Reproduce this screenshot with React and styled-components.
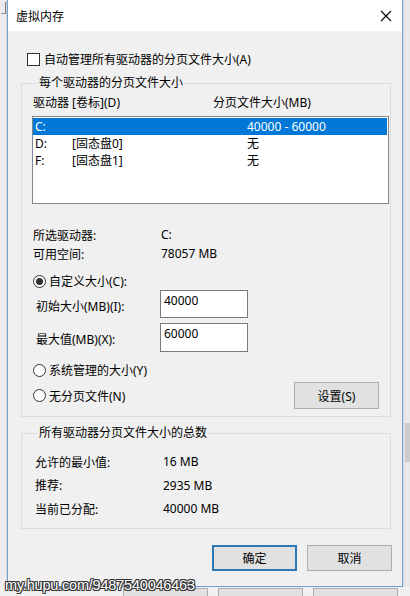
import styled, { createGlobalStyle } from "styled-components";

const GlobalStyle = createGlobalStyle`
  html, body {
    margin: 0;
    padding: 0;
    background: #e6e6e6;
  }
  * {
    box-sizing: border-box;
  }
`;

const font = `"Noto Sans", "Noto Sans CJK SC", sans-serif`;

const Page = styled.div`
  position: relative;
  width: 410px;
  height: 596px;
  overflow: hidden;
  display: flex;
  flex-direction: column;
  font-family: ${font};
  font-size: 12px;
  color: #000;
`;

const TopArea = styled.div`
  display: flex;
  height: 587px;
`;

const LeftStrip = styled.div`
  width: 7px;
  background: #ececec;
  border-right: 1px solid #d6d6d6;
  display: flex;
  flex-direction: column;
  padding: 2px 0 0 1px;
`;

const LeftMark = styled.div`
  width: 5px;
  height: 12px;
  border-right: 1px solid #777;
  border-bottom: 1px solid #999;
`;

const RightStrip = styled.div`
  flex: 1;
  background: #e9e9e9;
  display: flex;
  flex-direction: column;
  padding-top: 423px;
  border-left: 2px solid #e1e1e1;
`;

const ScrollBlock = styled.div`
  height: 39px;
  background: #cdcdcd;
`;

const Dialog = styled.div`
  width: 396px;
  display: flex;
  flex-direction: column;
  border: 1px solid #6f9fd0;
  border-top: none;
  background: #f0f0f0;
`;

const TitleBar = styled.div`
  height: 31px;
  background: #fff;
  display: flex;
  align-items: center;
  justify-content: space-between;
  padding: 0 10px 0 8px;
`;

const Title = styled.span`
  font-size: 12px;
`;

const Body = styled.div`
  flex: 1;
  display: flex;
  flex-direction: column;
  padding: 20px 11px 0 13px;
`;

const CheckRow = styled.label`
  display: flex;
  align-items: center;
  height: 16px;
  padding-left: 6px;
  gap: 4px;
`;

const CheckBox = styled.span`
  width: 13px;
  height: 13px;
  border: 1px solid #333;
  background: #fff;
`;

const Group = styled.fieldset`
  margin: ${(p) => p.$top}px 0 0 0;
  border: 1px solid #dcdcdc;
  padding: 0 2px ${(p) => p.$bottom}px 10px;
  min-width: 0;
`;

const Legend = styled.legend`
  font-size: 12px;
  line-height: 14px;
  padding: 0 1px;
  margin-left: 6px;
  margin-bottom: ${(p) => p.$gap}px;
`;

const HeaderRow = styled.div`
  display: flex;
  height: 14px;
  line-height: 14px;
  padding-left: 1px;
  margin-top: 6px;
`;

const HeaderCell = styled.span`
  width: ${(p) => p.$w || "auto"};
`;

const ListBox = styled.div`
  margin-top: 6px;
  width: 357px;
  height: 88px;
  border: 1px solid #828790;
  background: #fff;
  padding: 1px 1px 0 0;
`;

const ListRow = styled.div`
  display: grid;
  grid-template-columns: 37px 175px 1fr;
  height: 17px;
  line-height: 17px;
  padding-left: 2px;
  background: ${(p) => (p.$selected ? "#0078d7" : "transparent")};
  color: ${(p) => (p.$selected ? "#fff" : "#000")};
`;

const InfoRow = styled.div`
  display: flex;
  height: ${(p) => p.$h}px;
  align-items: center;
  padding-left: ${(p) => p.$indent}px;
`;

const InfoLabel = styled.span`
  width: ${(p) => p.$w}px;
`;

const InfoTop = styled.div`
  margin-top: 21px;
`;

const RadioRow = styled.div`
  display: flex;
  align-items: center;
  justify-content: space-between;
  height: ${(p) => p.$h || 16}px;
  margin-top: ${(p) => p.$top}px;
  padding-right: 9px;
`;

const RadioLabel = styled.label`
  display: flex;
  align-items: center;
  gap: 3px;
  padding-left: 1px;
`;

const RadioCircle = styled.span`
  width: 13px;
  height: 13px;
  border-radius: 50%;
  border: 1px solid #333;
  background: #fff;
  display: flex;
  align-items: center;
  justify-content: center;
  &::after {
    content: "";
    width: 7px;
    height: 7px;
    border-radius: 50%;
    background: ${(p) => (p.$checked ? "#333" : "transparent")};
  }
`;

const FieldRow = styled.div`
  display: flex;
  align-items: center;
  margin-top: ${(p) => p.$top}px;
  padding-left: 4px;
`;

const FieldLabel = styled.span`
  width: 124px;
  padding-top: 3px;
`;

const TextBox = styled.div`
  width: 88px;
  height: ${(p) => p.$h}px;
  border: 1px solid #7a7a7a;
  background: #fff;
  padding: 2px 3px;
  line-height: 16px;
`;

const Button = styled.button`
  width: 85px;
  height: ${(p) => p.$h || 26}px;
  font-family: ${font};
  font-size: 12px;
  color: #000;
  background: #e1e1e1;
  border: ${(p) => (p.$default ? "2px solid #2f78b8" : "1px solid #adadad")};
  padding: 0;
`;

const ButtonRow = styled.div`
  display: flex;
  justify-content: flex-end;
  gap: 10px;
  margin: 16px -1px 0 0;
`;

const BottomStrip = styled.div`
  flex: 1;
  display: flex;
  gap: 10px;
  padding: 1px 0 0 123px;
  background: #f0f0f0;
`;

const PeekButton = styled.div`
  width: 85px;
  border: 1px solid #adadad;
  border-bottom: none;
  background: #e1e1e1;
`;

const Watermark = styled.div`
  position: absolute;
  left: 5px;
  bottom: 3px;
  font-family: "Liberation Sans", sans-serif;
  font-size: 14.5px;
  letter-spacing: -0.2px;
  color: #fff;
  text-shadow: -1px -1px 0 #333, 1px -1px 0 #333, -1px 1px 0 #333,
    1px 1px 0 #333, 0 1px 0 #333, 0 -1px 0 #333;
`;

const CloseIcon = () => (
  <svg width="12" height="12" viewBox="0 0 12 12">
    <path d="M1 1 L11 11 M11 1 L1 11" stroke="#000" strokeWidth="1.1" fill="none" />
  </svg>
);

const drives = [
  { d: "C:", label: "", size: "40000 - 60000", selected: true },
  { d: "D:", label: "[固态盘0]", size: "无" },
  { d: "F:", label: "[固态盘1]", size: "无" },
];

const totals = [
  ["允许的最小值:", "16 MB"],
  ["推荐:", "2935 MB"],
  ["当前已分配:", "40000 MB"],
];

export default function App() {
  return (
    <>
      <GlobalStyle />
      <Page>
        <TopArea>
          <LeftStrip>
            <LeftMark />
          </LeftStrip>
          <Dialog>
            <TitleBar>
              <Title>虚拟内存</Title>
              <CloseIcon />
            </TitleBar>
            <Body>
              <CheckRow>
                <CheckBox />
                自动管理所有驱动器的分页文件大小(A)
              </CheckRow>

              <Group $top={9} $bottom={7}>
                <Legend $gap={0}>每个驱动器的分页文件大小</Legend>
                <HeaderRow>
                  <HeaderCell $w="180px">驱动器 [卷标](D)</HeaderCell>
                  <HeaderCell>分页文件大小(MB)</HeaderCell>
                </HeaderRow>
                <ListBox>
                  {drives.map((r) => (
                    <ListRow key={r.d} $selected={r.selected}>
                      <span>{r.d}</span>
                      <span>{r.label}</span>
                      <span>{r.size}</span>
                    </ListRow>
                  ))}
                </ListBox>

                <InfoTop>
                  <InfoRow $h={19} $indent={1}>
                    <InfoLabel $w={128}>所选驱动器:</InfoLabel>
                    <span>C:</span>
                  </InfoRow>
                  <InfoRow $h={19} $indent={1}>
                    <InfoLabel $w={128}>可用空间:</InfoLabel>
                    <span>78057 MB</span>
                  </InfoRow>
                </InfoTop>

                <RadioRow $top={10}>
                  <RadioLabel>
                    <RadioCircle $checked />
                    自定义大小(C):
                  </RadioLabel>
                </RadioRow>

                <FieldRow $top={1}>
                  <FieldLabel>初始大小(MB)(I):</FieldLabel>
                  <TextBox $h={28}>40000</TextBox>
                </FieldRow>
                <FieldRow $top={5}>
                  <FieldLabel>最大值(MB)(X):</FieldLabel>
                  <TextBox $h={29}>60000</TextBox>
                </FieldRow>

                <RadioRow $top={10}>
                  <RadioLabel>
                    <RadioCircle />
                    系统管理的大小(Y)
                  </RadioLabel>
                </RadioRow>
                <RadioRow $top={4} $h={27}>
                  <RadioLabel>
                    <RadioCircle />
                    无分页文件(N)
                  </RadioLabel>
                  <Button $h={27}>设置(S)</Button>
                </RadioRow>
              </Group>

              <Group $top={9} $bottom={7}>
                <Legend $gap={10}>所有驱动器分页文件大小的总数</Legend>
                {totals.map(([k, v]) => (
                  <InfoRow key={k} $h={23.5} $indent={3}>
                    <InfoLabel $w={128}>{k}</InfoLabel>
                    <span>{v}</span>
                  </InfoRow>
                ))}
              </Group>

              <ButtonRow>
                <Button $default>确定</Button>
                <Button>取消</Button>
              </ButtonRow>
            </Body>
          </Dialog>
          <RightStrip>
            <ScrollBlock />
          </RightStrip>
        </TopArea>
        <BottomStrip>
          <PeekButton />
          <PeekButton />
          <PeekButton />
        </BottomStrip>
        <Watermark>my.hupu.com/9487540046463</Watermark>
      </Page>
    </>
  );
}
